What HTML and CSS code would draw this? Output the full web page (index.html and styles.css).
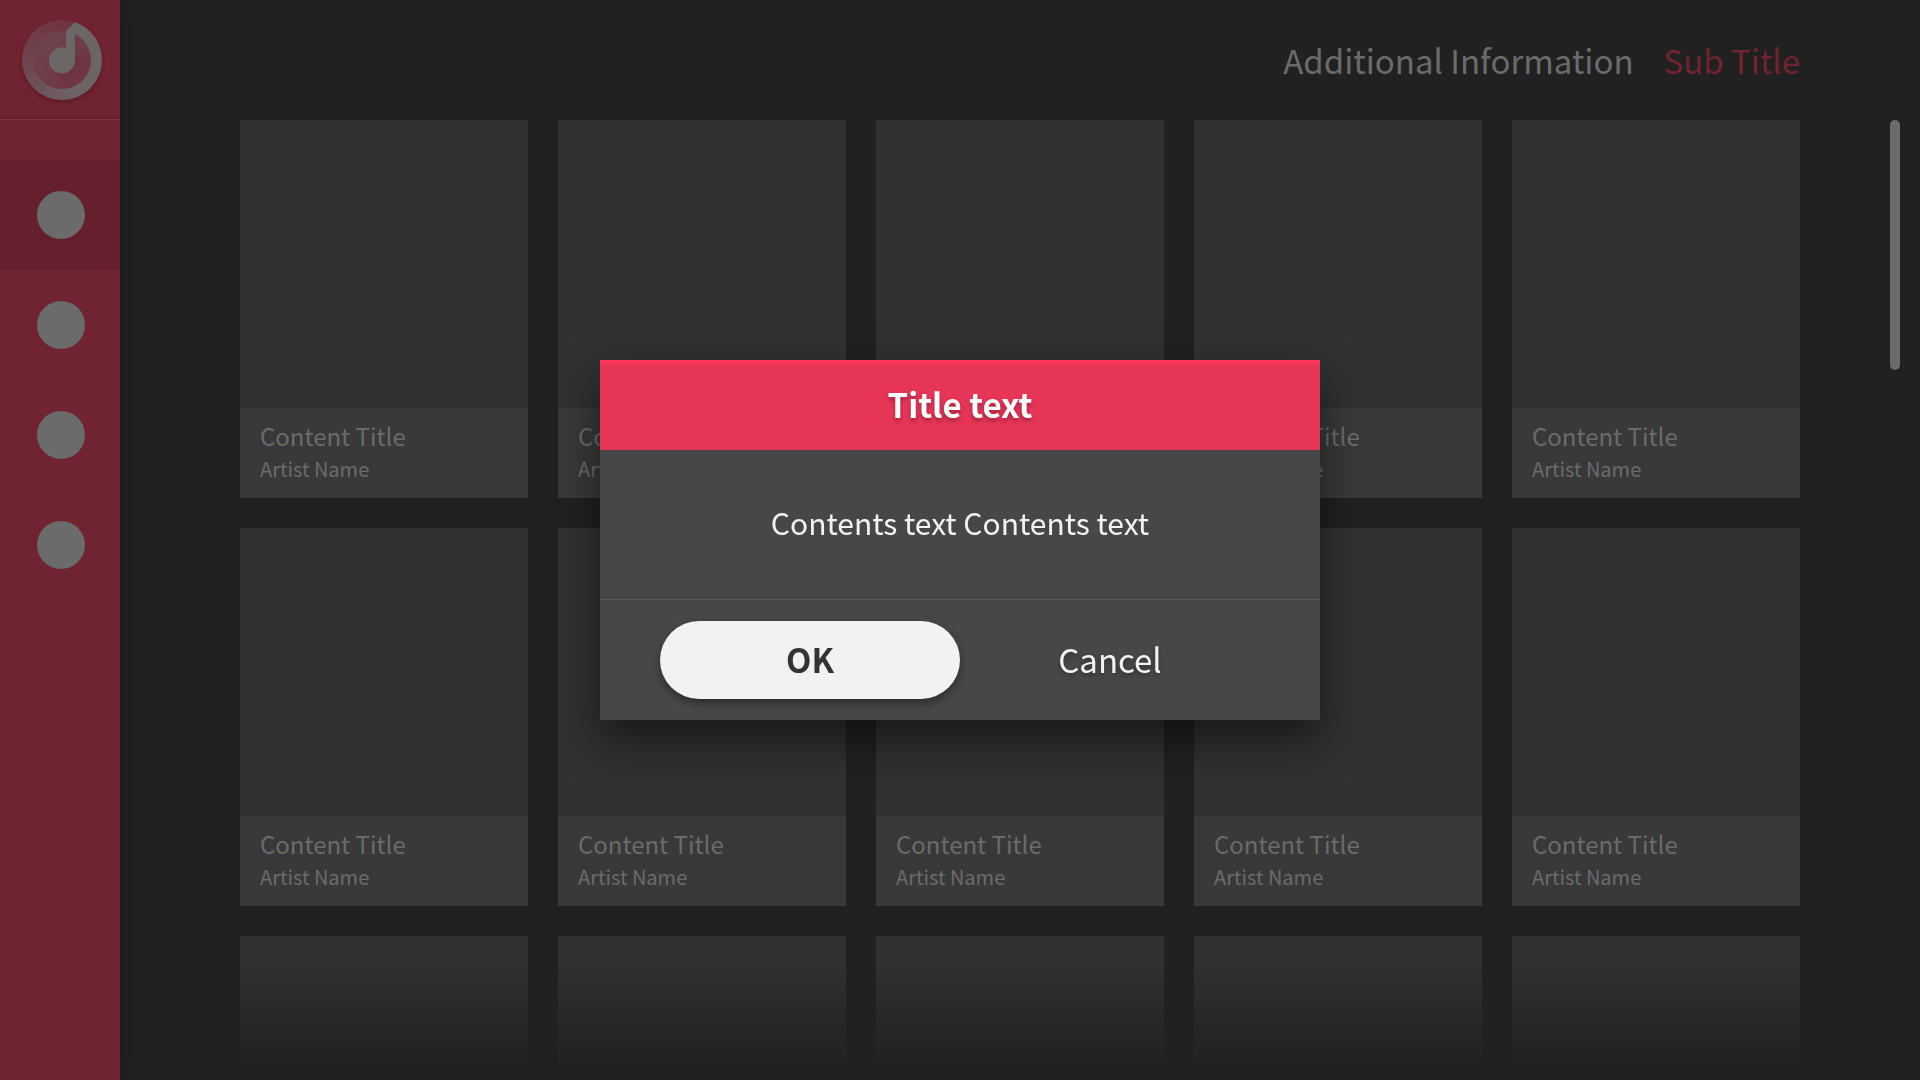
FILE: index.html
```
<!DOCTYPE html>
<html lang="en">
<head>
  <meta charset="UTF-8">
  <meta name="viewport" content="width=device-width, initial-scale=1.0">
  <title>Music</title>
  <link rel="stylesheet" href="styles.css">
</head>
<body>
  <nav class="sidebar">
    <a class="logo" href="#" aria-label="Home">
      <span class="logo-ring"></span>
      <svg class="logo-note" viewBox="0 0 80 80" aria-hidden="true">
        <defs>
          <linearGradient id="disc" x1="0" y1="0" x2="1" y2="1">
            <stop offset="0" stop-color="#6e4751"/>
            <stop offset="0.5" stop-color="#6f3c48"/>
            <stop offset="1" stop-color="#70303d"/>
          </linearGradient>
          <linearGradient id="cast" x1="0" y1="0" x2="1" y2="1">
            <stop offset="0.3" stop-color="#5c1c28" stop-opacity="0.3"/>
            <stop offset="0.8" stop-color="#5c1c28" stop-opacity="0"/>
          </linearGradient>
        </defs>
        <circle cx="40" cy="40" r="29" fill="url(#disc)"/>
        <path d="M31 49L43 61A29 29 0 0 0 66 50L53 32V40Z" fill="url(#cast)"/>
        <path d="M53 2V40A13 13 0 1 1 44 28V11Z" fill="#6c6666"/>
      </svg>
    </a>
    <ul class="menu">
      <li><a class="menu-item active" href="#" aria-label="Menu 1"><span class="dot"></span></a></li>
      <li><a class="menu-item" href="#" aria-label="Menu 2"><span class="dot"></span></a></li>
      <li><a class="menu-item" href="#" aria-label="Menu 3"><span class="dot"></span></a></li>
      <li><a class="menu-item" href="#" aria-label="Menu 4"><span class="dot"></span></a></li>
    </ul>
  </nav>

  <main class="content">
    <header class="page-header">
      <span class="info">Additional Information</span>
      <span class="sub-title">Sub Title</span>
    </header>

    <div class="card-grid">
      <article class="card">
        <div class="thumb"></div>
        <div class="caption"><h2>Content Title</h2><p>Artist Name</p></div>
      </article>
      <article class="card">
        <div class="thumb"></div>
        <div class="caption"><h2>Content Title</h2><p>Artist Name</p></div>
      </article>
      <article class="card">
        <div class="thumb"></div>
        <div class="caption"></div>
      </article>
      <article class="card">
        <div class="thumb"></div>
        <div class="caption"><h2>Content Title</h2><p>Artist Name</p></div>
      </article>
      <article class="card">
        <div class="thumb"></div>
        <div class="caption"><h2>Content Title</h2><p>Artist Name</p></div>
      </article>

      <article class="card">
        <div class="thumb"></div>
        <div class="caption"><h2>Content Title</h2><p>Artist Name</p></div>
      </article>
      <article class="card">
        <div class="thumb"></div>
        <div class="caption"><h2>Content Title</h2><p>Artist Name</p></div>
      </article>
      <article class="card">
        <div class="thumb"></div>
        <div class="caption"><h2>Content Title</h2><p>Artist Name</p></div>
      </article>
      <article class="card">
        <div class="thumb"></div>
        <div class="caption"><h2>Content Title</h2><p>Artist Name</p></div>
      </article>
      <article class="card">
        <div class="thumb"></div>
        <div class="caption"><h2>Content Title</h2><p>Artist Name</p></div>
      </article>

      <article class="card"><div class="thumb"></div></article>
      <article class="card"><div class="thumb"></div></article>
      <article class="card"><div class="thumb"></div></article>
      <article class="card"><div class="thumb"></div></article>
      <article class="card"><div class="thumb"></div></article>
    </div>

    <div class="fade"></div>
    <div class="scroll-thumb"></div>
  </main>

  <div class="overlay">
    <section class="popup" role="dialog" aria-modal="true" aria-labelledby="popup-title">
      <h1 class="popup-title" id="popup-title">Title text</h1>
      <p class="popup-text">Contents text Contents text</p>
      <div class="popup-buttons">
        <button type="button" class="btn btn-focus">OK</button>
        <button type="button" class="btn">Cancel</button>
      </div>
    </section>
  </div>
</body>
</html>
```
FILE: styles.css
```
* {
  box-sizing: border-box;
  margin: 0;
  padding: 0;
}

body {
  display: flex;
  height: 100vh;
  overflow: hidden;
  background-color: #212121;
  font-family: "Noto Sans CJK KR", "Noto Sans", sans-serif;
}

/* sidebar */
.sidebar {
  position: relative;
  z-index: 1;
  flex: 0 0 120px;
  background-color: #702330;
  box-shadow: 0 0 30px rgba(0, 0, 0, 0.15);
}

.logo {
  position: relative;
  display: block;
  height: 120px;
  padding: 20px 18px 20px 22px;
  border-bottom: 1px solid #7a3743;
  box-shadow: inset 0 -1px 0 #642030;
}

.logo-ring {
  display: block;
  width: 80px;
  height: 80px;
  border-radius: 50%;
  background: conic-gradient(from 19deg, #6c6666 0deg, #6c6464 140deg, #6d565c 190deg, #6f444e 250deg, #703541 340deg, #70313e 360deg);
  box-shadow: 0 2px 4px rgba(0, 0, 0, 0.2);
}

.logo-note {
  position: absolute;
  top: 20px;
  left: 22px;
  width: 80px;
  height: 80px;
}

.menu {
  list-style: none;
  padding-top: 40px;
}

.menu-item {
  display: flex;
  align-items: center;
  justify-content: center;
  height: 110px;
  padding-left: 2px;
}

.menu-item.active {
  background-color: #651f2d;
}

.dot {
  width: 48px;
  height: 48px;
  border-radius: 50%;
  background-color: #6b6b6b;
}

/* content */
.content {
  position: relative;
  flex: 1;
  overflow: hidden;
  padding: 0 120px;
}

.page-header {
  display: flex;
  align-items: center;
  justify-content: flex-end;
  gap: 30px;
  height: 120px;
  font-size: 33px;
  color: #6b6b6b;
}

.sub-title {
  color: #702330;
}

.card-grid {
  display: grid;
  grid-template-columns: repeat(5, 1fr);
  gap: 30px;
}

.thumb {
  aspect-ratio: 1;
  background-color: #313131;
}

.caption {
  height: 90px;
  padding: 12px 20px;
  background-color: #393939;
  color: #6b6b6b;
}

.caption h2 {
  font-size: 24px;
  font-weight: 400;
  line-height: 32px;
}

.caption p {
  font-size: 20px;
  line-height: 34px;
}

.fade {
  position: absolute;
  right: 0;
  bottom: 0;
  left: 0;
  height: 120px;
  background: linear-gradient(rgba(33, 33, 33, 0), #212121 90%);
}

.scroll-thumb {
  position: absolute;
  top: 120px;
  right: 20px;
  width: 10px;
  height: 250px;
  border-radius: 5px;
  background-color: #6b6b6b;
}

/* popup */
.overlay {
  position: fixed;
  inset: 0;
  z-index: 2;
  display: flex;
  align-items: center;
  justify-content: center;
}

.popup {
  width: 720px;
  max-width: 100%;
  background-color: #474747;
  box-shadow: 0 20px 40px rgba(0, 0, 0, 0.5);
  color: #f2f2f2;
}

.popup-title {
  height: 90px;
  border-top: 4px solid #ff355e;
  background-color: #e63556;
  font-size: 33px;
  line-height: 80px;
  text-align: center;
  color: #fff;
  text-shadow: 0 3px 4px rgba(0, 0, 0, 0.3);
}

.popup-text {
  padding: 48px 40px 53px;
  font-size: 30px;
  line-height: 48px;
  text-align: center;
}

.popup-buttons {
  display: flex;
  padding: 21px 60px;
  border-top: 1px solid #5a5a5a;
}

.btn {
  flex: 1;
  height: 78px;
  padding-bottom: 2px;
  border: none;
  border-radius: 39px;
  background: none;
  font-family: inherit;
  font-size: 33px;
  color: #f2f2f2;
  text-shadow: 0 3px 4px rgba(0, 0, 0, 0.3);
  cursor: pointer;
}

.btn-focus {
  background-color: #f2f2f2;
  box-shadow: 0 4px 8px rgba(0, 0, 0, 0.4);
  font-weight: 700;
  color: #333;
  text-shadow: none;
}
```
